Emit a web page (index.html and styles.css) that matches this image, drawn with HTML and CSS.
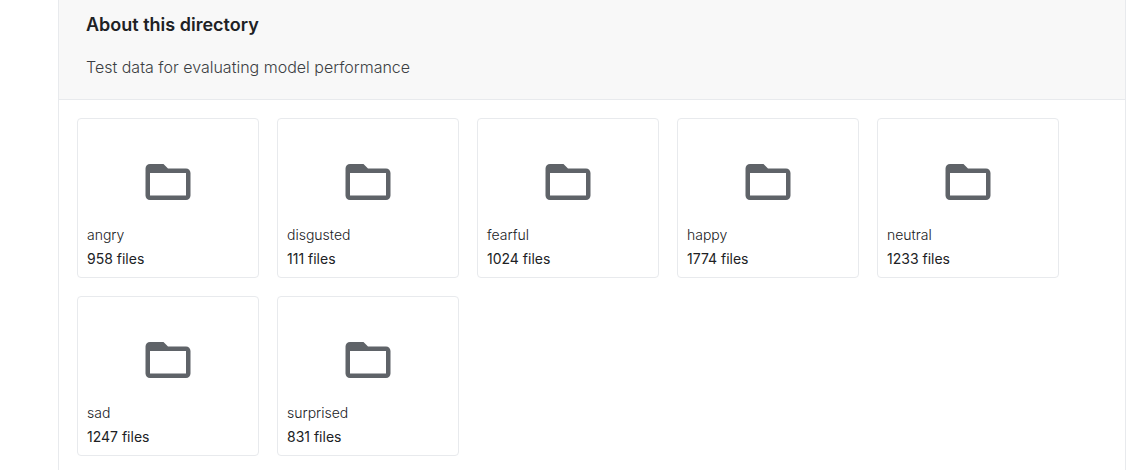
FILE: index.html
```html
<!DOCTYPE html>
<html lang="en">
<head>
<meta charset="utf-8">
<title>About this directory</title>
<link rel="stylesheet" href="styles.css">
</head>
<body>
<svg class="symbols" aria-hidden="true"><symbol id="folder" viewBox="0 0 24 24"><path d="M20 6h-8l-2-2H4c-1.100 0-1.990.9-1.990 2L2 18c0 1.100.9 2 2 2h16c1.100 0 2-.9 2-2V8c0-1.100-.9-2-2-2zm0 12H4V8h16v10z"/></symbol></svg>
<main class="panel">
<header class="about">
<h1 class="about-title">About this directory</h1>
<p class="about-text">Test data for evaluating model performance</p>
</header>
<ul class="folders">
<li class="folder"><svg class="folder-icon" aria-hidden="true"><use href="#folder"/></svg><span class="folder-name">angry</span><span class="folder-count">958 files</span></li>
<li class="folder"><svg class="folder-icon" aria-hidden="true"><use href="#folder"/></svg><span class="folder-name">disgusted</span><span class="folder-count">111 files</span></li>
<li class="folder"><svg class="folder-icon" aria-hidden="true"><use href="#folder"/></svg><span class="folder-name">fearful</span><span class="folder-count">1024 files</span></li>
<li class="folder"><svg class="folder-icon" aria-hidden="true"><use href="#folder"/></svg><span class="folder-name">happy</span><span class="folder-count">1774 files</span></li>
<li class="folder"><svg class="folder-icon" aria-hidden="true"><use href="#folder"/></svg><span class="folder-name">neutral</span><span class="folder-count">1233 files</span></li>
<li class="folder"><svg class="folder-icon" aria-hidden="true"><use href="#folder"/></svg><span class="folder-name">sad</span><span class="folder-count">1247 files</span></li>
<li class="folder"><svg class="folder-icon" aria-hidden="true"><use href="#folder"/></svg><span class="folder-name">surprised</span><span class="folder-count">831 files</span></li>
</ul>
</main>
</body>
</html>
```
FILE: styles.css
```css
* { box-sizing: border-box; }
body { margin: 0; background: #fff; color: #202124; font-family: Inter, sans-serif; }
.symbols { display: none; }
.panel { min-height: 100vh; margin: 0 6px 0 58px; border: solid #e8eaed; border-width: 0 1px; }
.about { padding: 13px 27px 20px; background: #f8f8f8; border-bottom: 1px solid #e8eaed; }
.about-title { margin: 0 0 18px; font-size: 18px; line-height: 24px; font-weight: 600; }
.about-text { margin: 0; font-size: 16px; line-height: 24px; font-weight: 300; color: #3c4043; }
.folders { display: flex; flex-wrap: wrap; gap: 18px; margin: 0; padding: 18px; list-style: none; }
.folder { display: flex; flex-direction: column; width: 182px; padding: 36px 9px 6px; border: 1px solid #e8eaed; border-radius: 4px; font-size: 14px; line-height: 24px; }
.folder-icon { align-self: center; width: 54px; height: 54px; margin-bottom: 14px; fill: #5f6368; }
.folder-name { font-weight: 300; }
.folder-count { font-weight: 400; }
```
